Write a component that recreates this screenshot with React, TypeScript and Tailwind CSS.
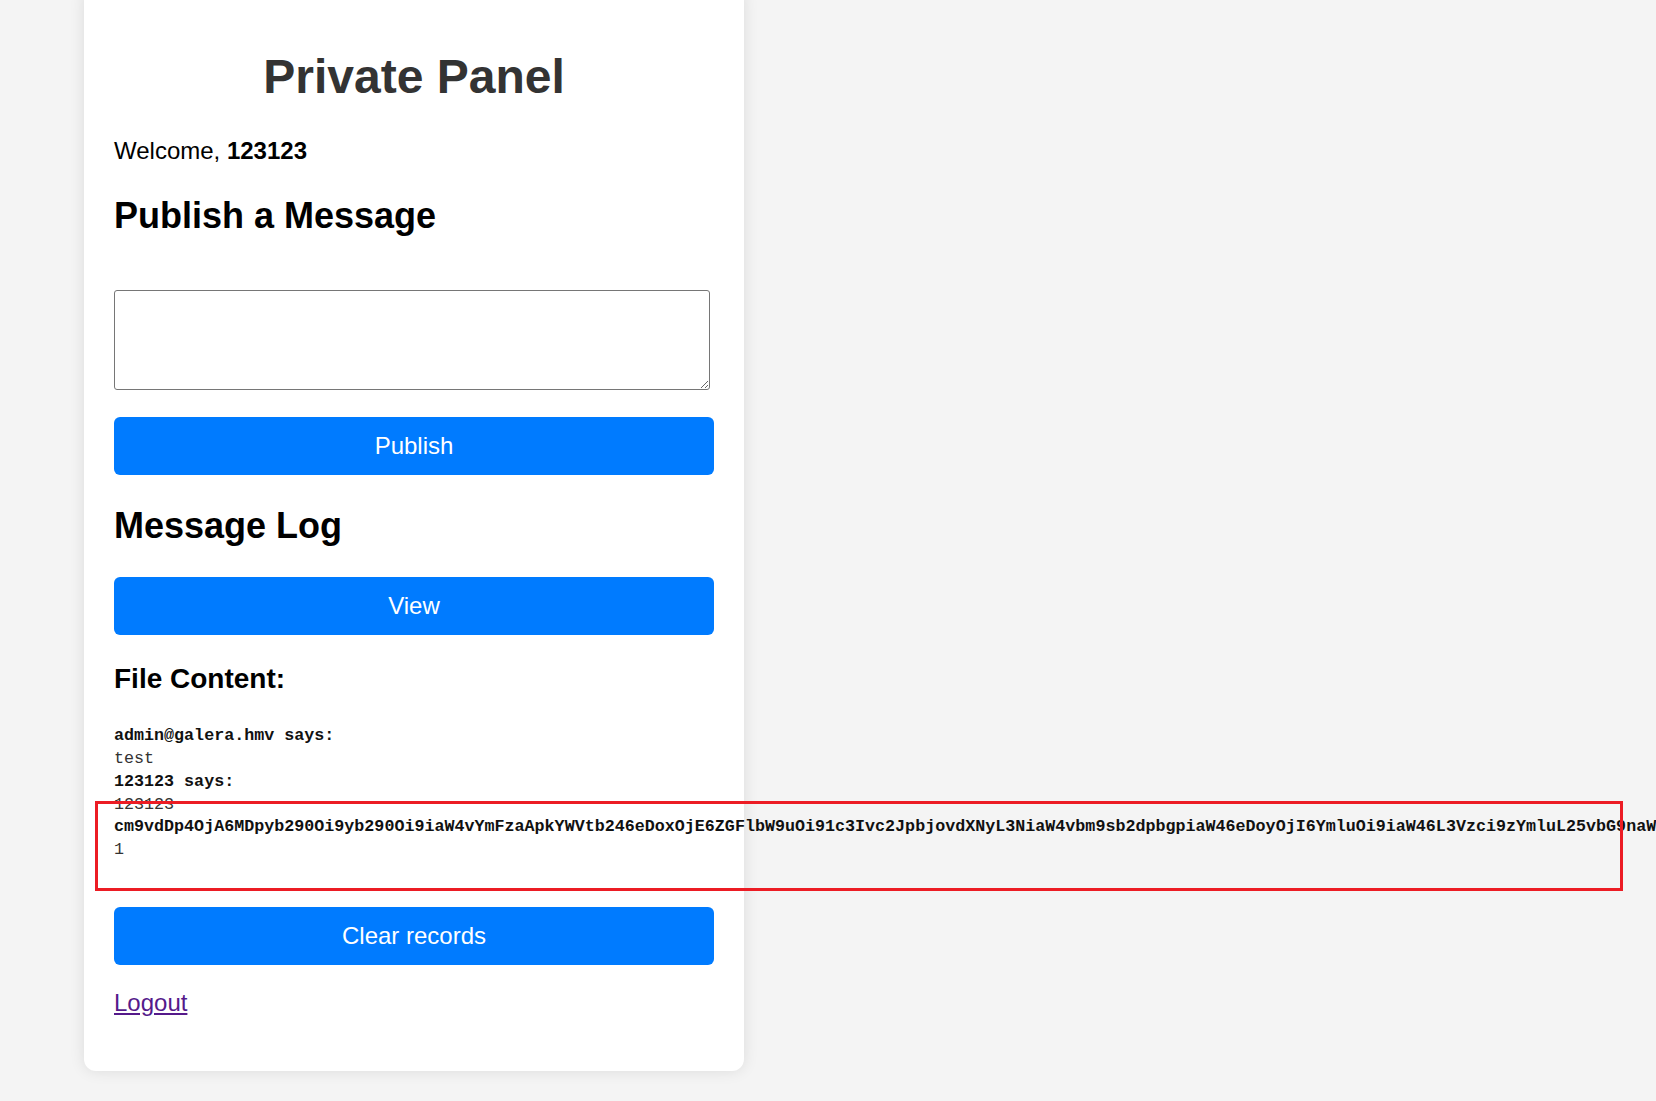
const BASE64_LINE =
  "cm9vdDp4OjA6MDpyb290Oi9yb290Oi9iaW4vYmFzaApkYWVtb246eDoxOjE6ZGFlbW9uOi91c3Ivc2JpbjovdXNyL3NiaW4vbm9sb2dpbgpiaW46eDoyOjI6YmluOi9iaW46L3Vzci9zYmluL25vbG9naW4Kc3lzOng6MzozOnN5czovZGV2Oi91c3Ivc2Jpbi9ub2xvZ2luCg== says:";

const LOG = [
  { user: "admin@galera.hmv says:", text: "test" },
  { user: "123123 says:", text: "123123" },
  { user: BASE64_LINE, text: "1" },
];

const PrimaryButton = ({ label, className = "" }: { label: string; className?: string }) => (
  <button
    className={`flex h-[58px] w-[600px] items-center justify-center rounded-[6px] bg-[#007bff] text-[24px] leading-[28px] text-white ${className}`}
  >
    {label}
  </button>
);

export default function App() {
  return (
    <div className="relative h-[1101px] w-full overflow-hidden bg-[#f4f4f4] font-['Liberation_Sans',Arial,sans-serif] text-black">
      <div className="-mt-3 ml-[84px] w-[660px] rounded-[12px] bg-white px-[30px] pt-[30px] pb-[54px] shadow-[0_0_15px_rgba(0,0,0,0.1)]">
        <h1 className="mt-[31px] text-center text-[48px] font-bold leading-[55px] text-[#333]">Private Panel</h1>

        <p className="mt-[33px] text-[24px] leading-[28px]">
          Welcome, <strong className="font-bold">123123</strong>
        </p>

        <h2 className="mt-[30px] text-[36px] font-bold leading-[41px]">Publish a Message</h2>

        <textarea className="mt-[54px] block h-[100px] w-[596px] rounded-[3px] border border-[#767676] bg-white p-1 text-[20px]" />

        <PrimaryButton label="Publish" className="mt-[27px]" />

        <h2 className="mt-[30px] text-[36px] font-bold leading-[41px]">Message Log</h2>

        <PrimaryButton label="View" className="mt-[31px]" />

        <h3 className="mt-[28px] text-[28px] font-bold leading-[32px]">File Content:</h3>

        <pre className="mt-[30px] overflow-visible whitespace-pre font-['Liberation_Mono','Courier_New',monospace] text-[16.7px] leading-[22.86px] text-[#111]">
          {LOG.map((entry, i) => (
            <div key={i}>
              <div className="font-bold">{entry.user}</div>
              <div className="text-[#333]">{entry.text}</div>
            </div>
          ))}
        </pre>

        <PrimaryButton label="Clear records" className="mt-[45px]" />

        <p className="mt-[24px] text-[24px] leading-[28px]">
          <a href="#" className="text-[#551a8b] underline">
            Logout
          </a>
        </p>
      </div>

      {/* screenshot annotation */}
      <div className="pointer-events-none absolute top-[801px] left-[95px] h-[90px] w-[1528px] border-[3px] border-[#ec1c24]" />
    </div>
  );
}
